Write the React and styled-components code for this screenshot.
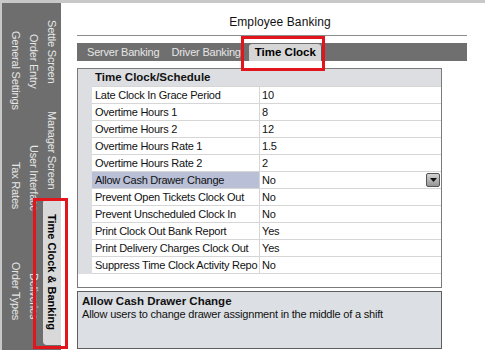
import React from 'react'
import styled, { createGlobalStyle } from 'styled-components'

const GlobalStyle = createGlobalStyle`
  html, body {
    margin: 0;
    padding: 0;
    background: #fff;
  }
  body {
    font-family: 'Liberation Sans', Arial, sans-serif;
  }
`

const sideRows = [
  { width: 19, tabs: [['General Settings', 134], ['Tax Rates', 98], ['Order Types', 112]] },
  { width: 18, tabs: [['Order Entry', 116], ['User Interface', 118], ['Deliveries', 118]] },
  { width: 18, tabs: [['Settle Screen', 98], ['Manager Screen', 98], ['Time Clock & Banking', 146, true]] }
]

const settings = [
  ['Late Clock In Grace Period', '10'],
  ['Overtime Hours 1', '8'],
  ['Overtime Hours 2', '12'],
  ['Overtime Hours Rate 1', '1.5'],
  ['Overtime Hours Rate 2', '2'],
  ['Allow Cash Drawer Change', 'No', true],
  ['Prevent Open Tickets Clock Out', 'No'],
  ['Prevent Unscheduled Clock In', 'No'],
  ['Print Clock Out Bank Report', 'Yes'],
  ['Print Delivery Charges Clock Out', 'Yes'],
  ['Suppress Time Clock Activity Repo', 'No']
]

const App = () => {
  return (
    <Window>
      <GlobalStyle />
      <Sidebar>
        {sideRows.map((row, i) => (
          <TabColumn key={i} width={row.width}>
            {row.tabs.map(([label, len, active]) => (
              <SideTab key={label} len={len} active={active} colWidth={row.width}>
                {label}
              </SideTab>
            ))}
          </TabColumn>
        ))}
      </Sidebar>

      <Content>
        <Title>Employee Banking</Title>
        <TabBar>
          <BarTab>Server Banking</BarTab>
          <BarTab>Driver Banking</BarTab>
          <BarTab active>Time Clock</BarTab>
        </TabBar>

        <Panel>
          <PanelHeader>Time Clock/Schedule</PanelHeader>
          {settings.map(([name, value, selected], i) => (
            <Row key={name}>
              <Gutter />
              <NameCell selected={selected} last={i === settings.length - 1}>
                {name}
              </NameCell>
              <ValueCell last={i === settings.length - 1}>
                {value}
                {selected && (
                  <DropButton>
                    <svg width='7' height='4' viewBox='0 0 7 4'>
                      <polygon points='0,0 7,0 3.5,4' fill='#111' />
                    </svg>
                  </DropButton>
                )}
              </ValueCell>
            </Row>
          ))}
        </Panel>

        <Description>
          <DescTitle>Allow Cash Drawer Change</DescTitle>
          <DescText>Allow users to change drawer assignment in the middle of a shift</DescText>
        </Description>
      </Content>

      {/* annotation boxes drawn over the screenshot */}
      <Highlight style={{ left: 239, top: 33, width: 84, height: 35 }} />
      <Highlight style={{ left: 31, top: 195, width: 35, height: 151 }} />
    </Window>
  )
}

export default App

const Window = styled.div`
  position: relative;
  display: flex;
  width: 485px;
  height: 350px;
  box-sizing: border-box;
  border-top: 3px solid #c8c8c8;
  border-left: 2px solid #c8c8c8;
  overflow: hidden;
  background: #fff;
`

const Sidebar = styled.div`
  display: flex;
  flex: none;
  width: 59px;
  padding-left: 4px;
  box-sizing: border-box;
  background: #6e6e6e;
`

const TabColumn = styled.div`
  display: flex;
  flex-direction: column;
  width: ${(p) => p.width}px;
`

const SideTab = styled.div`
  writing-mode: vertical-rl;
  flex: none;
  height: ${(p) => p.len}px;
  width: ${(p) => p.colWidth}px;
  box-sizing: border-box;
  text-align: center;
  line-height: ${(p) => p.colWidth}px;
  font-size: 11px;
  letter-spacing: ${(p) => (p.active ? '0' : '-0.2px')};
  white-space: nowrap;
  color: ${(p) => (p.active ? '#000' : '#e6e6e6')};
  font-weight: ${(p) => (p.active ? 'bold' : 'normal')};
  background: ${(p) => (p.active ? '#d9d9d9' : 'transparent')};
  border-radius: ${(p) => (p.active ? '4px 0 0 4px' : '0')};
`

const Content = styled.div`
  flex: 1;
  display: flex;
  flex-direction: column;
  padding: 0 18px 0 16px;
`

const Title = styled.div`
  height: 33px;
  box-sizing: border-box;
  padding: 12px 0 0 16px;
  border-bottom: 1px solid #8c8c8c;
  text-align: center;
  font-size: 12px;
  line-height: 15px;
  letter-spacing: 0.1px;
  color: #111;
`

const TabBar = styled.div`
  display: flex;
  align-items: flex-end;
  height: 18px;
  margin-top: 7px;
  padding-left: 4px;
  background: #6f6f6f;
`

const BarTab = styled.div`
  padding: 0 6px;
  white-space: nowrap;
  height: ${(p) => (p.active ? 17 : 18)}px;
  line-height: ${(p) => (p.active ? 17 : 18)}px;
  margin-left: ${(p) => (p.active ? 2 : 0)}px;
  font-size: ${(p) => (p.active ? 11.5 : 11)}px;
  font-weight: ${(p) => (p.active ? 'bold' : 'normal')};
  letter-spacing: ${(p) => (p.active ? '0' : '-0.2px')};
  color: ${(p) => (p.active ? '#000' : '#e6e6e6')};
  background: ${(p) => (p.active ? '#d6d6d6' : 'transparent')};
  border-radius: 3px 3px 0 0;
  box-shadow: ${(p) => (p.active ? 'inset -1px 0 #5a5a5a' : 'none')};
`

const Panel = styled.div`
  display: flex;
  flex-direction: column;
  width: 365px;
  height: 220px;
  margin-top: 7px;
  box-sizing: border-box;
  border: 1px solid #7a7a7a;
  background: #fff;
`

const PanelHeader = styled.div`
  height: 17px;
  padding-left: 17px;
  background: #dcdee2;
  font-size: 11.5px;
  font-weight: bold;
  line-height: 17px;
  color: #111;
`

const Row = styled.div`
  display: grid;
  grid-template-columns: 14px 168px 1fr;
`

const Gutter = styled.div`
  background: #dcdee2;
`

const Cell = styled.div`
  height: 16px;
  border-top: 1px solid #d6d6d6;
  border-bottom: ${(p) => (p.last ? '1px solid #d6d6d6' : 'none')};
  font-size: 11px;
  line-height: 16px;
  letter-spacing: -0.2px;
  color: #111;
  white-space: nowrap;
  overflow: hidden;
`

const NameCell = styled(Cell)`
  padding-left: 3px;
  border-right: 1px solid #d6d6d6;
  letter-spacing: -0.25px;
  background: ${(p) => (p.selected ? '#b8bfd6' : '#fff')};
`

const ValueCell = styled(Cell)`
  display: flex;
  align-items: center;
  justify-content: space-between;
  padding-left: 2px;
`

const DropButton = styled.div`
  display: flex;
  align-items: center;
  justify-content: center;
  width: 14px;
  height: 14px;
  margin-right: 1px;
  box-sizing: border-box;
  border: 1px solid #555;
  border-radius: 2px;
  background: linear-gradient(#d4d4d4, #959595);
`

const Description = styled.div`
  width: 365px;
  height: 58px;
  margin-top: 3px;
  padding: 3px 4px;
  box-sizing: border-box;
  border: 1px solid #5e5e5e;
  background: #dcdfe3;
  color: #111;
`

const DescTitle = styled.div`
  font-size: 11.5px;
  font-weight: bold;
  line-height: 13px;
`

const DescText = styled.div`
  font-size: 11px;
  line-height: 13px;
  letter-spacing: -0.2px;
`

const Highlight = styled.div`
  position: absolute;
  box-sizing: border-box;
  border: 3px solid #e2151d;
  pointer-events: none;
`
